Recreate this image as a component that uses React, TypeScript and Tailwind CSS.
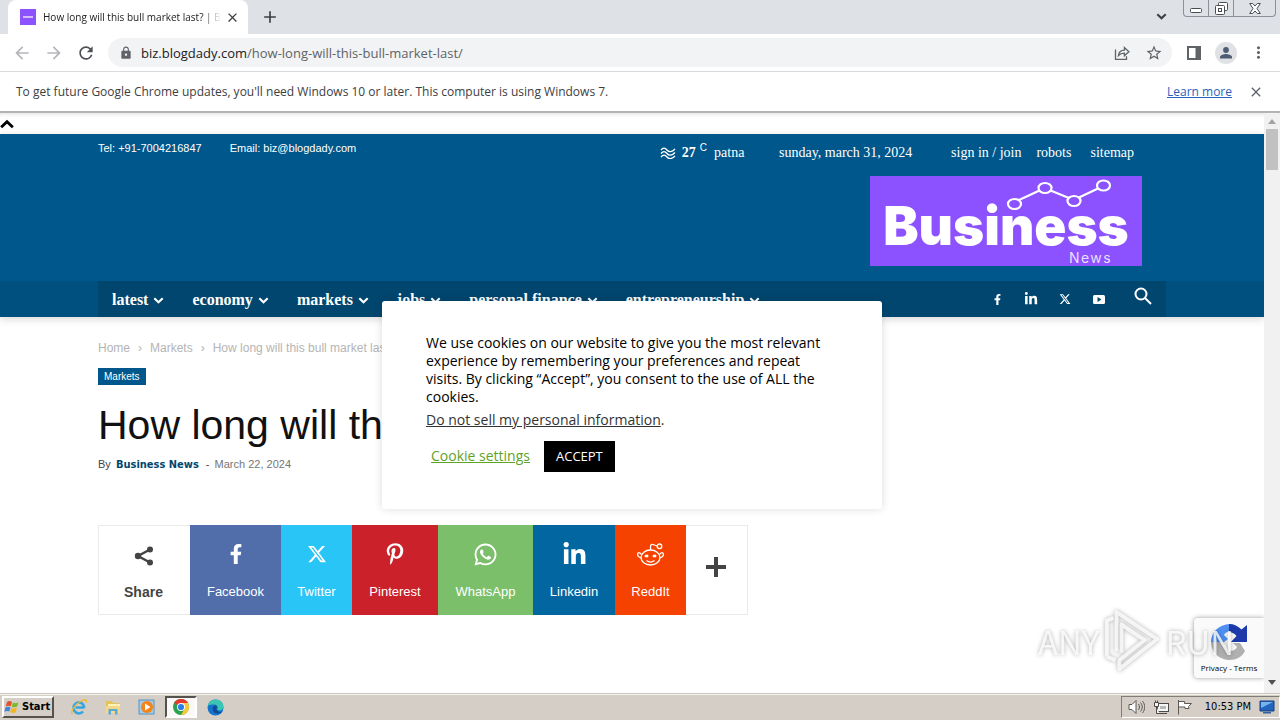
import type { ReactNode } from "react";
import { FaFacebookF, FaLinkedinIn, FaPinterestP, FaWhatsapp } from "react-icons/fa";
import { FaXTwitter } from "react-icons/fa6";
import {
  MdAdd,
  MdArrowBack,
  MdArrowForward,
  MdClose,
  MdLock,
  MdMoreVert,
  MdRefresh,
  MdStarBorder,
} from "react-icons/md";

const UI = "font-['Open_Sans','Noto_Sans',sans-serif]";
const SANS = "font-['Liberation_Sans',Arial,sans-serif]";
const SERIF = "font-['Liberation_Serif','Times_New_Roman',serif]";
const TAHOMA = "font-['DejaVu_Sans_Condensed','DejaVu_Sans',sans-serif]";

function Chevron({ className = "", up = false }: { className?: string; up?: boolean }) {
  return (
    <svg viewBox="0 0 12 8" className={className} fill="none" stroke="currentColor" strokeWidth="2.4" aria-hidden="true">
      <path d={up ? "M1 6.8 6 2l5 4.8" : "M1.2 1.4 6 6l4.8-4.6"} />
    </svg>
  );
}

function TabStrip() {
  return (
    <div className="flex h-[34px] shrink-0 items-start bg-[#dee1e6] pl-2">
      <div className="flex h-full w-60 items-center rounded-t-lg bg-white pl-3 pr-2">
        <span className="flex size-4 shrink-0 items-center justify-center bg-[#8c52ff]">
          <span className="h-0.5 w-2.5 bg-[#d3bcff]" />
        </span>
        <span className="ml-[7px] flex-1 overflow-hidden whitespace-nowrap text-[10px] text-[#202124] [mask-image:linear-gradient(to_right,black_90%,transparent)]">
          How long will this bull market last? | B
        </span>
        <button aria-label="Close tab" className="ml-1 text-[#3c4043]">
          <MdClose size={15} />
        </button>
      </div>
      <button aria-label="New tab" className="ml-3 mt-[7px] text-[#3c4043]">
        <MdAdd size={20} />
      </button>
      <div className="flex-1" />
      <button aria-label="Search tabs" className="mr-4 mt-[13px] text-[#3c4043]">
        <Chevron className="h-[7px] w-[11px]" />
      </button>
      <div className="mr-1 flex h-[17px] rounded-b border border-t-0 border-[#8d9096] text-[#4a4d52]">
        <button aria-label="Minimize" className="flex w-[25px] items-center justify-center border-r border-[#8d9096]">
          <svg viewBox="0 0 12 5" className="mt-1 h-[5px] w-3" fill="#fff" stroke="currentColor" aria-hidden="true">
            <rect x=".5" y=".5" width="11" height="4" rx="1" />
          </svg>
        </button>
        <button aria-label="Restore" className="flex w-[25px] items-center justify-center border-r border-[#8d9096]">
          <svg viewBox="0 0 13 13" className="size-[13px]" fill="#fff" stroke="currentColor" aria-hidden="true">
            <rect x="3.5" y=".5" width="9" height="8" rx="1" />
            <rect x=".5" y="3.5" width="9" height="9" rx="1" />
            <rect x="3.5" y="6.5" width="3" height="3" />
          </svg>
        </button>
        <button aria-label="Close" className="flex w-[41px] items-center justify-center">
          <svg viewBox="0 0 12 11" className="h-[11px] w-3" fill="#fff" stroke="currentColor" aria-hidden="true">
            <path d="M.7.5h3L6 3 8.300.5h3L8 5.500l3.300 5h-3L6 8l-2.300 2.500h-3L4 5.500z" />
          </svg>
        </button>
      </div>
    </div>
  );
}

function Toolbar() {
  return (
    <div className="flex h-[38px] shrink-0 items-center border-b border-[#d8dadd] bg-white pl-3 pr-3 text-[#5f6368]">
      <button aria-label="Back" className="text-[#b4b6b9]"><MdArrowBack size={20} /></button>
      <button aria-label="Forward" className="ml-3 text-[#b4b6b9]"><MdArrowForward size={20} /></button>
      <button aria-label="Reload" className="ml-3 text-[#4d5156]"><MdRefresh size={20} /></button>
      <div className="ml-3 flex h-[29px] flex-1 items-center rounded-full bg-[#f1f3f4] pl-[11px] pr-[9px]">
        <MdLock size={14} />
        <span className="ml-2 flex-1 text-[13px] leading-5 text-[#5f6368]">
          <span className="text-[#202124]">biz.blogdady.com</span>/how-long-will-this-bull-market-last/
        </span>
        <button aria-label="Share this page">
          <svg viewBox="0 0 16 16" className="size-4" fill="none" stroke="currentColor" strokeWidth="1.3" aria-hidden="true">
            <path d="M1.500 4.500v9.800h11v-3" />
            <path d="M4.500 10.500c.4-3.600 2.600-5.200 5.900-5.300V2.500l4.500 4.200-4.500 4.100V8.200c-2.500 0-4.300.5-5.900 2.300z" />
          </svg>
        </button>
        <button aria-label="Bookmark this tab" className="ml-[15px]"><MdStarBorder size={18} /></button>
      </div>
      <button aria-label="Side panel" className="ml-[14px]">
        <svg viewBox="0 0 16 16" className="size-4" aria-hidden="true">
          <path fill="currentColor" fillRule="evenodd" d="M1 1h14v14H1zm2 2v10h6.500V3z" />
        </svg>
      </button>
      <button aria-label="Profile" className="ml-[13px] flex size-[22px] items-center justify-center rounded-full bg-[#dfe1e5]">
        <svg viewBox="0 0 14 14" className="size-[14px]" fill="#4f5b73" aria-hidden="true">
          <circle cx="7" cy="4" r="2.900" />
          <path d="M1 12.500V11c0-2 4-3 6-3s6 1 6 3v1.500z" />
        </svg>
      </button>
      <button aria-label="Menu" className="ml-3"><MdMoreVert size={19} /></button>
    </div>
  );
}

function InfoBar() {
  return (
    <div className="flex h-[41px] shrink-0 items-center border-b-2 border-[#b3b3b3] bg-white px-4 text-[12px] text-[#3c4043]">
      <span className="flex-1">
        To get future Google Chrome updates, you'll need Windows 10 or later. This computer is using Windows 7.
      </span>
      <a href="#learn-more" className="text-[#2a62bd] underline">Learn more</a>
      <button aria-label="Dismiss" className="ml-4 text-[#5f6368]"><MdClose size={16} /></button>
    </div>
  );
}

function Logo() {
  return (
    <a href="#home" aria-label="Business News" className="relative block h-[90px] w-[272px] bg-[#8c52ff] font-['Inter',sans-serif] text-white">
      <svg viewBox="0 0 110 34" className="absolute left-[135px] top-0.5 h-[34px] w-[110px]" fill="none" stroke="#fff" strokeWidth="2.200" aria-hidden="true">
        <path d="M14 22 34.500 12.500M45.500 12.500 64 20M74 19.500l19-9" />
        <ellipse cx="9.500" cy="26" rx="6.500" ry="5" />
        <ellipse cx="40" cy="10" rx="6.500" ry="5" />
        <ellipse cx="69" cy="23" rx="6.500" ry="5" />
        <ellipse cx="98.500" cy="7.500" rx="6.500" ry="5" />
      </svg>
      <span className="absolute inset-x-0 top-[30px] text-center text-[53px] font-black leading-[40px]">Business</span>
      <span className="absolute bottom-0 right-[30px] text-[14px] leading-4 tracking-widest text-[#eadfff]">News</span>
    </a>
  );
}

const NAV = ["latest", "economy", "markets", "jobs", "personal finance", "entrepreneurship"];

function SiteHeader() {
  return (
    <header className="bg-[#00578b] text-white shadow-[0_2px_8px_rgba(0,0,0,0.16)]">
      <div className="mx-auto max-w-[1068px]">
        <div className={`flex h-[37px] items-center pr-8 text-[14px] ${SERIF}`}>
          <div className={`flex flex-1 gap-7 pb-2 text-[11px] ${SANS}`}>
            <span>Tel: +91-7004216847</span>
            <span>Email: biz@blogdady.com</span>
          </div>
          <svg viewBox="0 0 16 12" className="h-3 w-4" fill="none" stroke="currentColor" strokeWidth="1.300" aria-hidden="true">
            <path d="M1 3c2-2.500 4-2.500 6 0s5 2 8-1M1 6.500c2-2.500 4-2.500 6 0s5 2 8-1M1 10c2-2.500 4-2.500 6 0s5 2 8-1" />
          </svg>
          <span className="ml-1.5 font-bold">27</span>
          <sup className={`ml-1 text-[10px] ${SANS}`}>C</sup>
          <span className="ml-[7px] w-[65px]">patna</span>
          <span className="w-[172px]">sunday, march 31, 2024</span>
          <nav aria-label="Account" className="flex gap-[15px]">
            <a href="#signin">sign in / join</a>
            <a href="#robots">robots</a>
            <a href="#sitemap" className="ml-1">sitemap</a>
          </nav>
        </div>
        <div className="flex justify-end pb-[15px] pr-6 pt-[5px]">
          <Logo />
        </div>
      </div>
      <div className="bg-[#00507f]">
        <div className="mx-auto flex h-9 max-w-[1068px] items-center bg-[#00466f]">
          <nav aria-label="Main" className={`flex flex-1 pt-0.5 text-[16px] font-bold ${SERIF}`}>
            {NAV.map((item) => (
              <a key={item} href="#section" className="flex items-center gap-[5px] whitespace-nowrap px-[14px]">
                {item}
                <Chevron className="h-[7px] w-[11px]" />
              </a>
            ))}
          </nav>
          <div className="flex items-center pr-[14px]">
            <a href="#facebook" aria-label="Facebook" className="flex w-[34px] justify-center"><FaFacebookF size={11} /></a>
            <a href="#linkedin" aria-label="LinkedIn" className="flex w-[34px] justify-center"><FaLinkedinIn size={14} /></a>
            <a href="#x" aria-label="X" className="flex w-[34px] justify-center"><FaXTwitter size={12} /></a>
            <a href="#youtube" aria-label="YouTube" className="flex w-[34px] justify-center">
              <svg viewBox="0 0 12 9" className="h-[9px] w-3" aria-hidden="true">
                <rect width="12" height="9" rx="1.500" fill="currentColor" />
                <path d="M4.500 2v5L8.500 4.500z" fill="#00466f" />
              </svg>
            </a>
            <button aria-label="Search" className="ml-[18px] pb-1.5">
              <svg viewBox="0 0 18 18" className="size-[18px]" fill="none" stroke="currentColor" strokeWidth="2" aria-hidden="true">
                <circle cx="7" cy="7" r="5.500" />
                <path d="m11 11 6 6" />
              </svg>
            </button>
          </div>
        </div>
      </div>
    </header>
  );
}

function RedditIcon() {
  return (
    <svg viewBox="0 0 27 23" className="h-[23px] w-[27px]" fill="none" stroke="currentColor" strokeWidth="1.300" aria-hidden="true">
      <ellipse cx="13.500" cy="14.500" rx="9.500" ry="7.500" />
      <path d="M4.500 11.500C2 7.500-1 11 1.500 13.500l2.500 1.500M22.500 11.500C25 7.500 28 11 25.500 13.500L23 15" />
      <path d="M13.500 7V3.500c0-1.500 1-2.500 2.500-2l4 1.500" />
      <circle cx="22.500" cy="3.300" r="2.300" />
      <path d="M9.500 17.500c2.500 2 5.500 2 8 0" />
      <path d="M8 12h3v2H8zM16 12h3v2h-3z" fill="currentColor" strokeWidth=".6" />
    </svg>
  );
}

const SHARES: { name: string; box: string; icon: ReactNode }[] = [
  { name: "Facebook", box: "w-[91px] bg-[#516eab]", icon: <FaFacebookF size={20} /> },
  { name: "Twitter", box: "w-[71px] bg-[#29c5f6]", icon: <FaXTwitter size={20} /> },
  { name: "Pinterest", box: "w-[86px] bg-[#ca212a]", icon: <FaPinterestP size={22} /> },
  { name: "WhatsApp", box: "w-[95px] bg-[#7bbf6a]", icon: <FaWhatsapp size={25} /> },
  { name: "Linkedin", box: "w-[82px] bg-[#0266a0]", icon: <FaLinkedinIn size={25} /> },
  { name: "ReddIt", box: "w-[71px] bg-[#f54200]", icon: <RedditIcon /> },
];

function Article() {
  return (
    <main className={`mx-auto max-w-[1068px] ${SANS}`}>
      <nav aria-label="Breadcrumb" className="flex gap-2 pt-[23px] text-[12px] leading-4 text-[#b4b4b4]">
        <a href="#home">Home</a>
        <span>›</span>
        <a href="#markets">Markets</a>
        <span>›</span>
        <span>How long will this bull market last?</span>
      </nav>
      <a href="#markets" className="mt-3 inline-block bg-[#00578b] px-1.5 text-[10px] leading-[17px] text-white">
        Markets
      </a>
      <h1 className="mt-[13px] text-[41px] leading-[50px] text-[#111]">How long will this bull market last?</h1>
      <p className="mt-1.5 text-[11px] leading-4 text-[#767676]">
        <span className="text-[#444]">By</span>{" "}
        <a href="#author" className={`mx-0.5 font-bold text-[#00466f] ${TAHOMA}`}>Business News</a>{" "}
        <span className="mx-0.5 text-[#444]">-</span> <time dateTime="2024-03-22">March 22, 2024</time>
      </p>
      <div className="mt-[52px] flex h-[90px] text-[13px] leading-4">
        <div className="flex w-[92px] flex-col items-center border border-r-0 border-[#e9e9e9] pr-0.5 pt-[18px] font-bold text-[#444]">
          <span className="flex h-6 items-center">
            <svg viewBox="0 0 20 20" className="size-5" fill="currentColor" aria-hidden="true">
              <path d="M16 3.500 4 10l12 6.500" fill="none" stroke="currentColor" strokeWidth="2.400" />
              <circle cx="16" cy="3.600" r="3" />
              <circle cx="4" cy="10" r="3.200" />
              <circle cx="16" cy="16.400" r="3" />
            </svg>
          </span>
          <span className="mt-4 text-[14px]">Share</span>
        </div>
        {SHARES.map((s) => (
          <a key={s.name} href="#share" className={`flex flex-col items-center pt-[17px] text-white ${s.box}`}>
            <span className="flex h-6 items-center">{s.icon}</span>
            <span className="mt-[18px]">{s.name}</span>
          </a>
        ))}
        <button aria-label="More sharing options" className="flex w-[62px] items-center justify-center border border-l-0 border-[#e9e9e9] pb-1.5 pr-0.5 text-[#444]">
          <svg viewBox="0 0 20 20" className="size-5" aria-hidden="true">
            <path d="M8 0h4v8h8v4h-8v8H8v-8H0V8h8z" fill="currentColor" />
          </svg>
        </button>
      </div>
    </main>
  );
}

function CookieDialog() {
  return (
    <div className="absolute inset-0 flex items-center justify-center pb-1 pt-[7px]">
      <section
        role="dialog"
        aria-label="Cookie consent"
        className="h-[208px] w-[500px] rounded-[3px] bg-white px-[44px] pt-[33px] text-[14px] leading-[18px] text-black shadow-[0_0_9px_rgba(0,0,0,0.14)]"
      >
        <p>
          We use cookies on our website to give you the most relevant experience by remembering your preferences and
          repeat visits. By clicking “Accept”, you consent to the use of ALL the cookies.
        </p>
        <p className="mt-[5px] text-[#333]">
          <a href="#privacy" className="underline">Do not sell my personal information</a>.
        </p>
        <div className="mt-3 flex items-center gap-[14px] pl-[5px]">
          <button className="text-[#61a229] underline">Cookie settings</button>
          <button className="h-[31px] bg-black px-3 text-[13px] text-white">ACCEPT</button>
        </div>
      </section>
    </div>
  );
}

function CaptchaBadge() {
  return (
    <aside className="absolute bottom-[15px] right-0 flex h-[60px] w-[70px] flex-col items-center rounded-l-sm bg-[#fafafa] pt-1 shadow-[0_0_5px_#999]">
      <svg viewBox="0 0 40 40" className="size-10" aria-hidden="true">
        <path fill="#1c3aa9" d="M20 2c5 0 9 2 12.500 5.500L38 3v17H22l5.500-6C25 11 22.500 10 20 10z" />
        <path fill="#4f90f2" d="M2 20C2 11 9 3 20 2v8c-3 0-4 1-5 3l4 4-4 3z" />
        <path fill="#b0b0b0" d="M2 20h13c0 6 3 9 6 9 4 0 6-2 7-4l-4-4h7l5 8c-3 6-9 9-15 9C10 38 2 30 2 20z" />
      </svg>
      <span className="whitespace-nowrap text-[8px] leading-3 text-black">
        <a href="#privacy">Privacy</a> - <a href="#terms">Terms</a>
      </span>
    </aside>
  );
}

function Watermark() {
  return (
    <div className="pointer-events-none absolute bottom-[18px] right-[46px] flex items-center gap-[5px] font-['Noto_Sans_CJK_SC',sans-serif] text-[33px] leading-[68px] text-white/80 [filter:drop-shadow(0_0_2px_rgba(0,0,0,0.4))]">
      <span>ANY</span>
      <svg viewBox="0 0 58 66" className="h-16 w-14" fill="none" stroke="currentColor" strokeWidth="4" strokeLinejoin="round" aria-hidden="true">
        <path d="M3 49V12l7-3M3 49l9 4" />
        <path d="M13 44V3l42 28-39 31V53l26-21-24-16v29" />
      </svg>
      <span>RUN</span>
    </div>
  );
}

function Scrollbar() {
  return (
    <div className="flex w-4 shrink-0 flex-col items-center justify-between bg-[#f1f1f1] py-1">
      <div className="flex flex-col items-center gap-[5px]">
        <svg viewBox="0 0 8 5" className="mt-0.5 h-[5px] w-2" fill="#a3a3a3" aria-hidden="true"><path d="M4 0 8 5H0z" /></svg>
        <div className="h-[41px] w-3 bg-[#c1c1c1]" />
      </div>
      <svg viewBox="0 0 8 5" className="mb-1 h-[5px] w-2" fill="#505050" aria-hidden="true"><path d="M0 0h8L4 5z" /></svg>
    </div>
  );
}

function Taskbar() {
  return (
    <footer className={`flex h-[27px] shrink-0 items-center border-t border-[#c9c6bf] bg-[#d4cec6] pl-0.5 text-[11px] text-black shadow-[inset_0_1px_#f4f2ee] ${TAHOMA}`}>
      <button className="flex h-[22px] w-[52px] items-center gap-0.5 border-2 border-b-[#55524d] border-l-white border-r-[#55524d] border-t-white text-[11px] font-bold">
        <svg viewBox="0 0 16 16" className="size-4 shrink-0" aria-hidden="true">
          <path fill="#e2532c" d="M3 3c2-1.500 3.500-1 5 0L6.800 7.300C5 6.300 3.500 6.500 1.800 7.500z" />
          <path fill="#7db928" d="M9 3.400c2 1 3.500 1 5.500-.2L13.200 7.600c-2 1-3.500.9-5.400.1z" />
          <path fill="#3f86d8" d="M1.500 8.500c2-1 3.300-1 5-.1L5.300 12.600c-2-1-3.300-.7-5 .3z" />
          <path fill="#f4b51f" d="M7.500 8.900c2 1 3.500.9 5.400-.1l-1.200 4.400c-2 1-3.500 1-5.400-.1z" />
        </svg>
        Start
      </button>
      <button aria-label="Internet Explorer" className="ml-4">
        <svg viewBox="0 0 18 18" className="size-[18px]" fill="none" aria-hidden="true">
          <path d="M14.500 9.500h-9M14.400 9.500a5.500 5.500 0 1 0-1.300 4" stroke="#35a5df" strokeWidth="2.600" />
          <path d="M2.500 16c-2.500-2 2-9 7-12s8-3 6.500.5" stroke="#edb938" strokeWidth="1.400" />
        </svg>
      </button>
      <button aria-label="Explorer" className="ml-4">
        <svg viewBox="0 0 18 18" className="size-[18px]" aria-hidden="true">
          <path d="M2 3h6l1 2h7v10H2z" fill="#e3c35a" />
          <path d="M4 6h12v3H4z" fill="#fff2b7" />
          <path d="M2 8h14v7H2z" fill="#f3d987" />
          <path d="M4.500 16.500V11h9v5.500h-2.500V13H7v3.500z" fill="#5aa9d6" />
        </svg>
      </button>
      <button aria-label="Media Player" className="ml-4">
        <svg viewBox="0 0 18 18" className="size-[18px]" aria-hidden="true">
          <rect x="1" y="2" width="15" height="14" fill="#a3cbe8" stroke="#5b93c0" />
          <circle cx="9" cy="9" r="6" fill="#f48318" />
          <path d="M7 5.500v7L12.500 9z" fill="#fff" />
        </svg>
      </button>
      <button aria-label="Chrome" className="ml-[9px] flex h-[22px] w-8 items-center justify-center border-2 border-b-white border-l-[#55524d] border-r-white border-t-[#55524d] bg-[#faf9f7]">
        <svg viewBox="0 0 16 16" className="size-4" aria-hidden="true">
          <circle cx="8" cy="8" r="8" fill="#2ba24c" />
          <path d="M8 8 1.070 4A8 8 0 0 1 14.930 4z" fill="#e33b2e" />
          <path d="M8 4h6.930A8 8 0 0 1 8 16l3.460-6z" fill="#fcc934" />
          <circle cx="8" cy="8" r="4" fill="#fff" />
          <circle cx="8" cy="8" r="3.100" fill="#2f7de9" />
        </svg>
      </button>
      <button aria-label="Edge" className="ml-2.5">
        <svg viewBox="0 0 17 17" className="size-[17px]" aria-hidden="true">
          <circle cx="8.500" cy="8.500" r="8" fill="#1673ca" />
          <path d="M.7 7C2 2 6 .5 8.500.5c5 0 8 3.500 8 7 0 2.500-2 4-4 4s-3-.8-2-2c.8-1.200-.2-4-3.500-4S1.500 6 .7 7z" fill="#39c6b3" />
          <path d="M6 8c-1 3 1 6.500 4.500 6.500 2 0 4-.7 5-2-2 1-5.500.500-6-2.500-.1-1 .8-1.500.5-2.500S7 6 6 8z" fill="#124a94" />
        </svg>
      </button>
      <div className="flex-1" />
      <div className="flex h-[22px] items-center border border-b-white border-l-[#807d77] border-r-white border-t-[#807d77] pl-1.5 pr-1">
        <svg viewBox="0 0 17 16" className="h-4 w-[17px]" fill="#fff" stroke="#5b5954" aria-hidden="true">
          <path d="M1 5.500h3l4-4v13l-4-4H1z" />
          <path d="M10.500 5c1.300 2 1.300 4 0 6M12.500 3.500c2.300 3 2.300 6 0 9M14.500 2c3 4 3 8 0 12" fill="none" />
        </svg>
        <svg viewBox="0 0 16 16" className="ml-2 size-4" fill="#f5f5f3" stroke="#4d4b47" aria-hidden="true">
          <rect x="4.500" y="4.500" width="11" height="8" />
          <path d="M6 14.500h8M3.500 8v6.500h3M1.500 3.500h4v4h-4zM2.500 3.500v-2M4.500 3.500v-2" />
          <path d="M7 7h6v3H7z" fill="#b5b9ba" stroke="none" />
        </svg>
        <svg viewBox="0 0 16 16" className="ml-2 size-4" fill="#fff" stroke="#5b5954" aria-hidden="true">
          <path d="M1.500 1v14.500M1.500 2.500h6v2h7l-3 3 .5 2h-4V8h-6.500z" />
        </svg>
        <time className="ml-3 text-[11px]">10:53 PM</time>
        <svg viewBox="0 0 16 14" className="ml-2 h-[14px] w-4" aria-hidden="true">
          <path d="M1 1h14v10H1z" fill="#2365bd" stroke="#123f80" />
          <path d="M2 2h12L2 8z" fill="#75b4ed" />
          <path d="M4 12h8v1.500H4z" fill="#30639d" />
        </svg>
      </div>
    </footer>
  );
}

export default function App() {
  return (
    <div className={`flex h-screen flex-col overflow-hidden bg-white ${UI}`}>
      <TabStrip />
      <Toolbar />
      <InfoBar />
      <div className="relative flex min-h-0 flex-1">
        <div className="relative min-w-0 flex-1 overflow-hidden bg-white">
          <div className="flex h-[21px] items-center bg-gradient-to-b from-[#eaeaea] to-white to-20%">
            <Chevron up className="h-[10px] w-[14px] text-black" />
          </div>
          <SiteHeader />
          <Article />
          <CookieDialog />
          <CaptchaBadge />
        </div>
        <Scrollbar />
        <Watermark />
      </div>
      <Taskbar />
    </div>
  );
}
